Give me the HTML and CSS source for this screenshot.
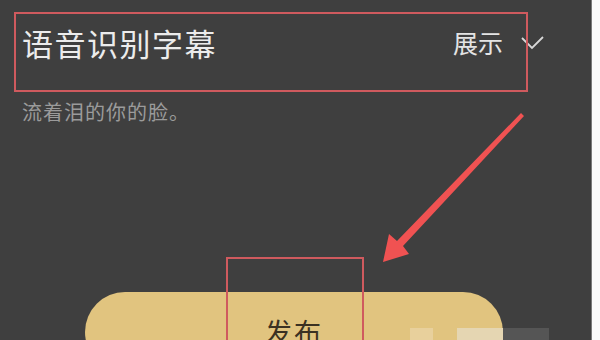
FILE: index.html
```html
<!DOCTYPE html>
<html lang="zh-CN">
<head>
    <meta charset="UTF-8">
    <title>语音识别字幕</title>
    <link rel="stylesheet" href="styles.css">
</head>
<body>
    <div class="page">
        <div class="screen">
            <div class="header">
                <h1 class="title">语音识别字幕</h1>
                <div class="mode">
                    <span>展示</span>
                    <svg class="chevron" width="24" height="14" viewBox="0 0 24 14">
                        <path d="M1 2 L11 12 L22 1" fill="none" stroke="#d8d8d8" stroke-width="1.8"/>
                    </svg>
                </div>
            </div>
            <p class="caption">流着泪的你的脸。</p>
            <button class="publish-btn">发布</button>

            <!-- annotations -->
            <div class="mark mark-header"></div>
            <div class="mark mark-btn"></div>
            <svg class="arrow" width="592" height="340" viewBox="0 0 592 340">
                <polygon points="521,113 524,116 403,246 409,254 383,262 389,234 397,241" fill="#f05252"/>
            </svg>
            <div class="blot blot-a"></div>
            <div class="blot blot-b"></div>
            <div class="blot blot-c"></div>
        </div>
        <div class="edge"></div>
    </div>
</body>
</html>
```

FILE: styles.css
```css
body {
    margin: 0;
    padding: 0;
    background: #3f3f3f;
    font-family: "Noto Sans CJK SC", "Noto Sans", sans-serif;
}

.page {
    display: flex;
    width: 600px;
    height: 340px;
    overflow: hidden;
}

.screen {
    position: relative;
    width: 591px;
    height: 340px;
    background: #3f3f3f;
}

.edge {
    width: 8px;
    background: #fafafa;
    border-left: 1px solid #7a7a7a;
}

.header {
    display: flex;
    align-items: center;
    justify-content: space-between;
    height: 84px;
    padding: 0 46px 0 22px;
}

.title {
    margin: 0;
    font-size: 31px;
    font-weight: 400;
    letter-spacing: 1.5px;
    color: #ececec;
}

.mode {
    display: flex;
    align-items: center;
    gap: 18px;
    font-size: 25px;
    color: #e4e4e4;
}

.chevron {
    margin-top: 2px;
}

.caption {
    margin: 16px 0 0 22px;
    font-size: 20px;
    line-height: 24px;
    letter-spacing: 1px;
    color: #9b9b9b;
}

.publish-btn {
    display: block;
    margin: 168px 0 0 85px;
    width: 418px;
    height: 80px;
    border: none;
    border-radius: 40px;
    background: #e1c47f;
    color: #3b3122;
    font-family: inherit;
    font-size: 27px;
    letter-spacing: 2px;
    padding: 0 0 1px 0;
}

.mark {
    position: absolute;
    border: 2px solid #cf5a5e;
}

.mark-header {
    left: 14px;
    top: 12px;
    width: 510px;
    height: 76px;
}

.mark-btn {
    left: 226px;
    top: 257px;
    width: 134px;
    height: 100px;
}

.arrow {
    position: absolute;
    left: 0;
    top: 0;
}

.blot {
    position: absolute;
    top: 328px;
    height: 12px;
}

.blot-a {
    left: 410px;
    width: 23px;
    background: #e8d09c;
}

.blot-b {
    left: 457px;
    width: 46px;
    background: #e5d6b2;
}

.blot-c {
    left: 503px;
    width: 46px;
    background: #555555;
}
```
